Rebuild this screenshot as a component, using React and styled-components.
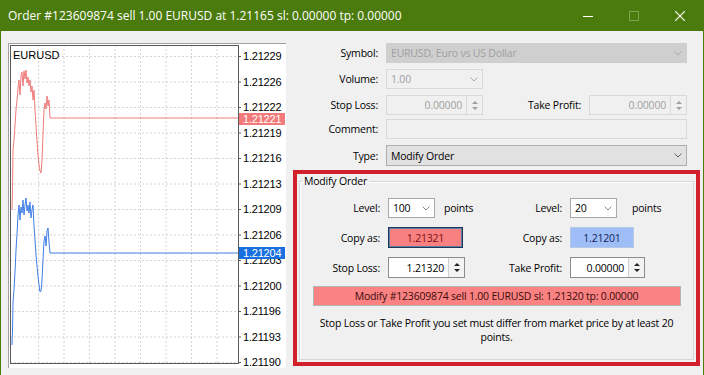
import React from 'react';
import styled, { createGlobalStyle } from 'styled-components';

const UI = '"Segoe UI", "Open Sans", "Liberation Sans", sans-serif';

const GlobalStyle = createGlobalStyle`
  html, body { margin: 0; padding: 0; background: #f0f0f0; }
  body { font-family: ${UI}; font-size: 10.5px; letter-spacing: -0.2px; color: #000; }
  * { box-sizing: border-box; }
`;

// ---------- window chrome ----------
const Window = styled.div`
  width: 704px;
  height: 375px;
  background: #f0f0f0;
  border-left: 1px solid #4b7b0c;
  border-right: 1px solid #4b7b0c;
  display: flex;
  flex-direction: column;
  overflow: hidden;
`;

const TitleBar = styled.div`
  height: 31px;
  flex: none;
  background: #4b7b0c;
  display: flex;
  align-items: center;
  padding-left: 7px;
  color: #fff;
  font-size: 12px;
  letter-spacing: 0;
`;

const Title = styled.div`
  flex: 1;
  white-space: nowrap;
`;

const Controls = styled.div`
  display: flex;
  height: 100%;
`;

const CtrlButton = styled.div`
  width: 46px;
  height: 100%;
  display: flex;
  align-items: center;
  justify-content: center;
  opacity: ${p => (p.$dim ? 0.3 : 1)};
`;

const Body = styled.div`
  flex: 1;
  display: flex;
  padding-top: 12px;
`;

// ---------- chart ----------
const ChartPanel = styled.div`
  width: 278px;
  height: 325px;
  margin-left: 7px;
  flex: none;
  background: #fff;
  border-top: 1px solid #a0a0a0;
  border-left: 1px solid #a0a0a0;
`;

const X = x => x - 9;
const Y = y => y - 44;

const redPts = [
  [12, 210], [12.5, 190], [13, 150], [14, 140], [15, 125], [16, 110], [17, 100], [18, 88],
  [19, 80], [20, 95], [21, 76], [22, 72], [23, 86], [24, 71], [25, 79], [26, 70], [27, 83],
  [28, 77], [29, 86], [30, 80], [31, 92], [32, 86], [33, 100], [34, 90], [35, 110], [36, 126],
  [37, 141], [38, 155], [39, 165], [40, 171], [41, 173], [42, 160], [43, 134], [44, 110],
  [45, 103], [46, 109], [47, 96], [48, 106], [49, 100], [50, 118], [238, 118],
];

const bluePts = [
  [12, 345], [12.5, 330], [13, 302], [14, 290], [15, 272], [15.5, 262], [16, 250], [17, 234],
  [18, 215], [19, 205], [20, 220], [21, 207], [22, 213], [23, 200], [24, 215], [25, 205],
  [26, 198], [27, 211], [28, 205], [29, 213], [30, 202], [31, 218], [32, 210], [33, 205],
  [34, 226], [35, 240], [36, 255], [37, 266], [38, 276], [39, 285], [40, 292], [41, 291],
  [42, 280], [43, 260], [44, 241], [45, 236], [46, 246], [47, 231], [48, 228], [49, 242],
  [50, 253], [238, 253],
];

const labels = ['1.21229', '1.21226', '1.21222', '1.21219', '1.21216', '1.21213', '1.21209',
  '1.21206', '1.21203', '1.21200', '1.21196', '1.21193', '1.21190'];

const toPath = pts => pts.map(([x, y], i) => `${i ? 'L' : 'M'}${X(x)} ${Y(y)}`).join(' ');

const Chart = () => {
  const rows = labels.map((_, i) => 56 + i * 25.5);
  const cols = Array.from({ length: 8 }, (_, j) => 38 + j * 25.5);
  return (
    <ChartPanel>
      <svg width="277" height="324" style={{ display: 'block', letterSpacing: 0 }}
        fontFamily='"Liberation Sans", Arial, sans-serif'>
        {rows.map(y => (
          <line key={'h' + y} x1={X(10)} x2={X(238)} y1={Y(y) + 0.5} y2={Y(y) + 0.5}
            stroke="#d4d4d4" strokeDasharray="2 2" />
        ))}
        {cols.map(x => (
          <line key={'v' + x} x1={X(x) + 0.5} x2={X(x) + 0.5} y1={Y(45)} y2={Y(363)}
            stroke="#d4d4d4" strokeDasharray="2 2" />
        ))}
        <rect x={X(10) + 0.5} y={Y(45) + 0.5} width={228} height={318} fill="none" stroke="#5a5a5a" />
        {rows.map(y => (
          <line key={'t' + y} x1={X(238)} x2={X(241)} y1={Y(y) + 0.5} y2={Y(y) + 0.5} stroke="#5a5a5a" />
        ))}
        {labels.map((l, i) => (
          <text key={l} x={X(243)} y={Y(rows[i]) + 4} fontSize="11" fill="#000" letterSpacing="-0.2">{l}</text>
        ))}
        <text x={X(13)} y={Y(59)} fontSize="11" fill="#000">EURUSD</text>
        <path d={toPath(redPts)} fill="none" stroke="#f07c7c" strokeWidth="1" />
        <path d={toPath(bluePts)} fill="none" stroke="#3f7fe6" strokeWidth="1" />
        <rect x={X(239)} y={Y(113)} width={46} height={12} fill="#f27a7a" />
        <text x={X(243)} y={Y(123)} fontSize="11" fill="#fff" letterSpacing="-0.2">1.21221</text>
        <rect x={X(239)} y={Y(247)} width={46} height={12} fill="#1a6fe0" />
        <text x={X(243)} y={Y(257)} fontSize="11" fill="#fff" letterSpacing="-0.2">1.21204</text>
      </svg>
    </ChartPanel>
  );
};

// ---------- form controls ----------
const Form = styled.div`
  flex: 1;
  display: flex;
  flex-direction: column;
`;

const Row = styled.div`
  display: flex;
  align-items: center;
  height: ${p => p.$h || 20}px;
  margin-top: ${p => p.$mt || 0}px;
`;

const Label = styled.div`
  width: ${p => p.$w || 100}px;
  flex: none;
  text-align: right;
  padding-right: 8px;
  white-space: nowrap;
`;

const Field = styled.div`
  width: ${p => p.$w}px;
  height: 100%;
  flex: none;
  display: flex;
  align-items: center;
  border: 1px solid ${p => p.$border || '#d9d9d9'};
  background: ${p => p.$bg || '#f0f0f0'};
  color: ${p => p.$color || '#a0a0a0'};
  padding-left: 4px;
  white-space: nowrap;
`;

const FieldText = styled.div`
  flex: 1;
  text-align: ${p => (p.$right ? 'right' : 'left')};
  padding-right: ${p => (p.$right ? 4 : 0)}px;
`;

const ChevronBox = styled.div`
  width: 16px;
  flex: none;
  display: flex;
  justify-content: center;
`;

const Chevron = ({ color = '#8a8a8a' }) => (
  <ChevronBox>
    <svg width="8" height="5" viewBox="0 0 8 5">
      <path d="M0.5 0.5 L4 4 L7.5 0.5" fill="none" stroke={color} strokeWidth="1" />
    </svg>
  </ChevronBox>
);

const SpinBox = styled.div`
  width: 16px;
  height: 100%;
  flex: none;
  display: flex;
  flex-direction: column;
  justify-content: center;
  align-items: center;
  gap: 3px;
  border-left: 1px solid ${p => p.$line};
  background: ${p => p.$bg};
`;

const Arrow = styled.div`
  width: 0;
  height: 0;
  border-left: 3px solid transparent;
  border-right: 3px solid transparent;
  ${p => (p.$down ? 'border-top' : 'border-bottom')}: 3px solid ${p => p.$color};
`;

const Spinner = ({ color, bg = '#f0f0f0', line = '#d9d9d9' }) => (
  <SpinBox $bg={bg} $line={line}>
    <Arrow $color={color} />
    <Arrow $down $color={color} />
  </SpinBox>
);

const Points = styled.span`
  margin-left: ${p => p.$gap || 9}px;
`;

// ---------- modify order box ----------
const Highlight = styled.div`
  margin: 4px 0 0 7px;
  width: 407px;
  height: 196px;
  border: 4px solid #d2202c;
  padding: 0 2px 0 2px;
`;

const Group = styled.fieldset`
  margin: 0;
  padding: 10px 0 0 0;
  height: 186px;
  border: 1px solid #d7d7d7;
  box-shadow: inset 1px 1px 0 #fff;
  min-width: 0;
`;

const Legend = styled.legend`
  margin-left: 2px;
  padding: 0 2px;
  line-height: 14px;
`;

const Grid = styled.div`
  display: grid;
  grid-template-columns: 88px 94px 88px 1fr;
  grid-template-rows: 20px 21px 21px;
  row-gap: 9px;
  align-items: center;
`;

const Cell = styled.div`
  display: flex;
  align-items: center;
  height: 100%;
  justify-content: ${p => (p.$label ? 'flex-end' : 'flex-start')};
  padding-right: ${p => (p.$label ? 8 : 0)}px;
  white-space: nowrap;
`;

const CopyBox = styled.div`
  width: ${p => p.$w}px;
  height: 100%;
  display: flex;
  align-items: center;
  justify-content: center;
  background: ${p => p.$bg};
  color: ${p => p.$color};
  border: 1px solid ${p => p.$border};
  box-shadow: ${p => (p.$focus ? 'inset 0 0 0 1px #5b7fa8' : 'none')};
`;

const ModifyButton = styled.div`
  width: 368px;
  height: 20px;
  margin: 8px auto 0 auto;
  background: #fa8282;
  border: 1px solid #b4b4b4;
  color: #3a0b0b;
  display: flex;
  align-items: center;
  justify-content: center;
`;

const Note = styled.div`
  margin-top: 10px;
  text-align: center;
  line-height: 14px;
`;

export default function App() {
  return (
    <>
      <GlobalStyle />
      <Window>
        <TitleBar>
          <Title>Order #123609874 sell 1.00 EURUSD at 1.21165 sl: 0.00000 tp: 0.00000</Title>
          <Controls>
            <CtrlButton>
              <svg width="10" height="10"><line x1="0" x2="10" y1="5.5" y2="5.5" stroke="#fff" /></svg>
            </CtrlButton>
            <CtrlButton $dim>
              <svg width="10" height="10"><rect x="0.5" y="0.5" width="9" height="9" fill="none" stroke="#fff" /></svg>
            </CtrlButton>
            <CtrlButton>
              <svg width="10" height="10"><path d="M0 0 L10 10 M10 0 L0 10" stroke="#fff" strokeWidth="1.1" /></svg>
            </CtrlButton>
          </Controls>
        </TitleBar>
        <Body>
          <Chart />
          <Form>
            <Row>
              <Label>Symbol:</Label>
              <Field $w={301} $bg="#cfcfcf" $border="#cfcfcf">
                <FieldText>EURUSD, Euro vs US Dollar</FieldText>
                <Chevron color="#a8a8a8" />
              </Field>
            </Row>
            <Row $mt={6}>
              <Label>Volume:</Label>
              <Field $w={97}>
                <FieldText>1.00</FieldText>
                <Chevron color="#a8a8a8" />
              </Field>
            </Row>
            <Row $mt={6}>
              <Label>Stop Loss:</Label>
              <Field $w={97}>
                <FieldText $right>0.00000</FieldText>
                <Spinner color="#a0a0a0" />
              </Field>
              <Label $w={106}>Take Profit:</Label>
              <Field $w={98}>
                <FieldText $right>0.00000</FieldText>
                <Spinner color="#a0a0a0" />
              </Field>
            </Row>
            <Row $mt={4}>
              <Label>Comment:</Label>
              <Field $w={301} />
            </Row>
            <Row $mt={6} $h={21}>
              <Label>Type:</Label>
              <Field $w={301} $bg="#e1e1e1" $border="#adadad" $color="#000">
                <FieldText>Modify Order</FieldText>
                <Chevron color="#606060" />
              </Field>
            </Row>
            <Highlight>
              <Group>
                <Legend>Modify Order</Legend>
                <Grid>
                  <Cell $label>Level:</Cell>
                  <Cell>
                    <Field $w={47} $bg="#fff" $border="#a8a8a8" $color="#000">
                      <FieldText>100</FieldText>
                      <Chevron />
                    </Field>
                    <Points>points</Points>
                  </Cell>
                  <Cell $label>Level:</Cell>
                  <Cell>
                    <Field $w={47} $bg="#fff" $border="#a8a8a8" $color="#000">
                      <FieldText>20</FieldText>
                      <Chevron />
                    </Field>
                    <Points $gap={15}>points</Points>
                  </Cell>

                  <Cell $label>Copy as:</Cell>
                  <Cell>
                    <CopyBox $w={75} $bg="#f88080" $color="#7a0f0f" $border="#1e3553" $focus>1.21321</CopyBox>
                  </Cell>
                  <Cell $label>Copy as:</Cell>
                  <Cell>
                    <CopyBox $w={64} $bg="#9fbdf6" $color="#13235c" $border="#b6c8e8">1.21201</CopyBox>
                  </Cell>

                  <Cell $label>Stop Loss:</Cell>
                  <Cell>
                    <Field $w={77} $bg="#fff" $border="#8c8c8c" $color="#000">
                      <FieldText $right>1.21320</FieldText>
                      <Spinner color="#222" bg="#f3f3f3" line="#cfcfcf" />
                    </Field>
                  </Cell>
                  <Cell $label>Take Profit:</Cell>
                  <Cell>
                    <Field $w={75} $bg="#fff" $border="#8c8c8c" $color="#000">
                      <FieldText $right>0.00000</FieldText>
                      <Spinner color="#222" bg="#f3f3f3" line="#cfcfcf" />
                    </Field>
                  </Cell>
                </Grid>
                <ModifyButton>Modify #123609874 sell 1.00 EURUSD sl: 1.21320 tp: 0.00000</ModifyButton>
                <Note>
                  Stop Loss or Take Profit you set must differ from market price by at least 20
                  <br />
                  points.
                </Note>
              </Group>
            </Highlight>
          </Form>
        </Body>
      </Window>
    </>
  );
}
